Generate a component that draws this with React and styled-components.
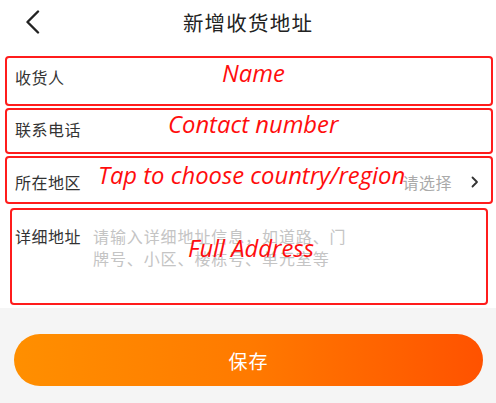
import React from 'react'
import styled, { createGlobalStyle } from 'styled-components'

const GlobalStyle = createGlobalStyle`
  html, body {
    margin: 0;
    padding: 0;
    background: #f5f5f5;
  }
  body {
    font-family: "Noto Sans", "Noto Sans CJK SC", sans-serif;
  }
`

const fields = [
  { label: '收货人', note: 'Name', noteTop: 1, noteLeft: 215, height: 50, padTop: 8 },
  { label: '联系电话', note: 'Contact number', noteTop: 0, noteLeft: 161, height: 46, padTop: 8 },
  {
    label: '所在地区',
    note: 'Tap to choose country/region',
    noteTop: 3,
    noteLeft: 91,
    height: 48,
    padTop: 13,
    picker: true,
  },
]

export default function App() {
  return (
    <Page>
      <GlobalStyle />
      <Header>
        <BackButton aria-label="back">
          <svg width="16" height="24" viewBox="0 0 16 24">
            <polyline points="13,1.5 2.5,12 13,22.5" fill="none" stroke="#222" strokeWidth="2.4" strokeLinecap="round" strokeLinejoin="round" />
          </svg>
        </BackButton>
        <Title>新增收货地址</Title>
      </Header>

      <Form>
        {fields.map((f) => (
          <Row key={f.label} $height={f.height} $padTop={f.padTop} $mx={5}>
            <Label>{f.label}</Label>
            {f.picker && (
              <Picker>
                <Hint>请选择</Hint>
                <svg width="8" height="12" viewBox="0 0 8 12">
                  <polyline points="1.5,1.5 6,6 1.5,10.5" fill="none" stroke="#333" strokeWidth="1.8" strokeLinecap="round" strokeLinejoin="round" />
                </svg>
              </Picker>
            )}
            <Note $top={f.noteTop} $left={f.noteLeft}>{f.note}</Note>
          </Row>
        ))}

        <Row $height={97} $padTop={15} $mx={10} $gapTop={4}>
          <Label>详细地址</Label>
          <Placeholder>请输入详细地址信息，如道路、门牌号、小区、楼栋号、单元室等</Placeholder>
          <Note $top={24} $left={176}>Full Address</Note>
        </Row>
      </Form>

      <Footer>
        <SaveButton>保存</SaveButton>
      </Footer>
    </Page>
  )
}

const Page = styled.div`
  min-height: 100vh;
  background: #f5f5f5;
  color: #333;
`

const Header = styled.header`
  position: relative;
  height: 50px;
  background: #fff;
  display: flex;
  align-items: center;
  justify-content: center;
`

const BackButton = styled.div`
  position: absolute;
  left: 25px;
  top: 10px;
  width: 16px;
  height: 24px;
  display: flex;
`

const Title = styled.h1`
  margin: 0;
  margin-top: -6px;
  font-family: "Noto Sans CJK SC", sans-serif;
  font-size: 20.5px;
  font-weight: 400;
  letter-spacing: 1.2px;
  color: #222;
`

const Form = styled.section`
  background: #fff;
  padding: 6px 0 3px;
`

const Row = styled.div`
  position: relative;
  box-sizing: border-box;
  height: ${(p) => p.$height}px;
  margin: ${(p) => p.$gapTop || 2}px ${(p) => p.$mx - 2}px 0 ${(p) => p.$mx}px;
  padding: ${(p) => p.$padTop}px 12px 0 ${(p) => 13 - p.$mx}px;
  border: 2px solid #ff1c1c;
  border-radius: 4px;
  display: flex;
  align-items: flex-start;
  &:first-child {
    margin-top: 0;
  }
`

const Label = styled.span`
  flex: none;
  width: 78px;
  font-family: "Noto Sans CJK SC", sans-serif;
  font-size: 16px;
  letter-spacing: 0.5px;
  line-height: 22px;
  color: #333;
`

const Picker = styled.div`
  margin-left: auto;
  display: flex;
  align-items: center;
  gap: 19px;
  height: 22px;
`

const Hint = styled.span`
  font-family: "Noto Sans CJK SC", sans-serif;
  font-size: 16px;
  letter-spacing: 0.5px;
  line-height: 22px;
  color: #aaa;
`

const Placeholder = styled.p`
  margin: 0;
  width: 262px;
  font-family: "Noto Sans CJK SC", sans-serif;
  font-size: 16px;
  letter-spacing: 0.9px;
  line-height: 22px;
  color: #c4c4c4;
`

const Note = styled.span`
  position: absolute;
  top: ${(p) => p.$top}px;
  left: ${(p) => p.$left}px;
  font-family: "Open Sans", sans-serif;
  font-style: italic;
  font-size: 23.8px;
  line-height: 28px;
  color: #ff0d0d;
  white-space: nowrap;
  pointer-events: none;
`

const Footer = styled.div`
  padding: 26px 13px 0 14px;
`

const SaveButton = styled.button`
  width: 100%;
  height: 52px;
  border: none;
  border-radius: 26px;
  background: linear-gradient(90deg, #ff8f00 0%, #ff7a00 50%, #ff5200 100%);
  color: #fff;
  font-family: "Noto Sans CJK SC", sans-serif;
  font-size: 19px;
  letter-spacing: 1px;
  cursor: pointer;
`
